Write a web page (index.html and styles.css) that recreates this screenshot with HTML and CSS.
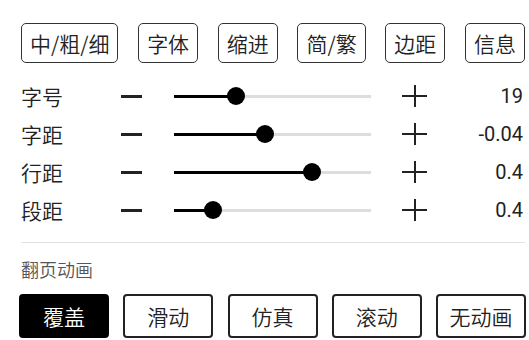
FILE: index.html
```html
<!DOCTYPE html>
<html lang="zh-CN">
<head>
  <meta charset="UTF-8">
  <meta name="viewport" content="width=device-width, initial-scale=1.0">
  <title>阅读设置</title>
  <link rel="stylesheet" href="styles.css">
</head>
<body>
  <div class="panel">
    <div class="tabs">
      <button class="tab">中/粗/细</button>
      <button class="tab">字体</button>
      <button class="tab">缩进</button>
      <button class="tab">简/繁</button>
      <button class="tab">边距</button>
      <button class="tab">信息</button>
    </div>

    <div class="rows">
      <div class="row">
        <span class="label">字号</span>
        <span class="minus"></span>
        <div class="slider"><div class="fill" style="width: 31.5%"></div></div>
        <span class="plus"></span>
        <span class="value">19</span>
      </div>
      <div class="row">
        <span class="label">字距</span>
        <span class="minus"></span>
        <div class="slider"><div class="fill" style="width: 46%"></div></div>
        <span class="plus"></span>
        <span class="value">-0.04</span>
      </div>
      <div class="row">
        <span class="label">行距</span>
        <span class="minus"></span>
        <div class="slider"><div class="fill" style="width: 70%"></div></div>
        <span class="plus"></span>
        <span class="value">0.4</span>
      </div>
      <div class="row">
        <span class="label">段距</span>
        <span class="minus"></span>
        <div class="slider"><div class="fill" style="width: 20%"></div></div>
        <span class="plus"></span>
        <span class="value">0.4</span>
      </div>
    </div>

    <hr class="divider">

    <div class="section-title">翻页动画</div>
    <div class="modes">
      <button class="mode active">覆盖</button>
      <button class="mode">滑动</button>
      <button class="mode">仿真</button>
      <button class="mode">滚动</button>
      <button class="mode">无动画</button>
    </div>
  </div>
</body>
</html>
```

FILE: styles.css
```css
body {
  margin: 0;
  background: #fff;
  font-family: Roboto, "Noto Sans CJK SC", sans-serif;
  color: #222;
}

.panel {
  width: 504px;
  margin-left: 21px;
  padding-top: 23px;
}

button {
  font-family: "Noto Sans CJK SC", sans-serif;
  font-weight: 350;
  background: white;
  color: #222;
  cursor: pointer;
}

.tabs {
  display: flex;
  justify-content: space-between;
}

.tab {
  height: 40px;
  padding: 0 8px;
  font-size: 21px;
  border: 1px solid #333;
  border-radius: 5px;
}

.rows {
  margin-top: 14px;
}

.row {
  display: flex;
  align-items: center;
  height: 38px;
}

.label {
  width: 100px;
  font-family: "Noto Sans CJK SC", sans-serif;
  font-weight: 350;
  font-size: 21px;
}

.minus {
  width: 21px;
  height: 3px;
  background: #222;
  margin-right: 32px;
}

.slider {
  position: relative;
  width: 197px;
  height: 3px;
  background: #ddd;
  margin-right: 31px;
}

.fill {
  position: relative;
  height: 100%;
  background: #000;
}

.fill::after {
  content: "";
  position: absolute;
  right: -9px;
  top: -7.5px;
  width: 18px;
  height: 18px;
  border-radius: 50%;
  background: #000;
}

.plus {
  position: relative;
  width: 25px;
  height: 22px;
}

.plus::before,
.plus::after {
  content: "";
  position: absolute;
  background: #222;
}

.plus::before {
  left: 0;
  right: 0;
  top: 10px;
  height: 2px;
}

.plus::after {
  top: 0;
  bottom: 0;
  left: 11.5px;
  width: 2px;
}

.value {
  flex: 1;
  text-align: right;
  font-size: 20px;
  padding-right: 2px;
}

.divider {
  border: none;
  border-top: 1px solid #e2e2e2;
  margin: 13px 0 0;
}

.section-title {
  margin-top: 14px;
  font-family: "Noto Sans CJK SC", sans-serif;
  font-weight: 350;
  font-size: 18px;
  line-height: 24px;
  color: #555;
}

.modes {
  display: flex;
  justify-content: space-between;
  margin: 13px -1px 0 -2px;
}

.mode {
  width: 90px;
  height: 44px;
  font-size: 21px;
  border: 2px solid #222;
  border-radius: 4px;
}

.mode.active {
  background: #000;
  border-color: #000;
  color: white;
}
```
